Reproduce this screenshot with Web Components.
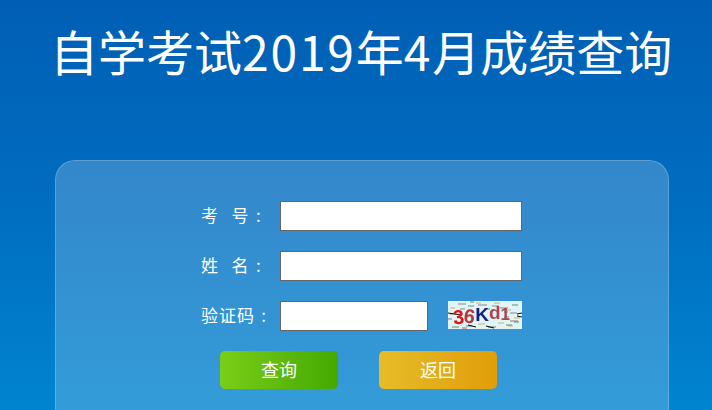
<!DOCTYPE html>
<html lang="zh">
<head>
<meta charset="utf-8">
<title>自学考试2019年4月成绩查询</title>
<style>
  html, body { margin: 0; height: 100%; }
  body {
    height: 410px;
    overflow: hidden;
    background: linear-gradient(180deg, #005fb5 0px, #006dc0 200px, #0084d0 410px);
    font-family: "Noto Sans CJK SC", "Liberation Sans", sans-serif;
  }
</style>
</head>
<body>
<score-page>
  <page-title slot="title">自学考试<i>2019</i>年<i>4</i>月成绩查询</page-title>
  <form-row><span slot="label">考&nbsp;&nbsp;号 :</span></form-row>
  <form-row><span slot="label">姓&nbsp;&nbsp;名 :</span></form-row>
  <form-row short><span slot="label">验证码 :</span><captcha-box slot="extra"></captcha-box></form-row>
  <div slot="actions" style="display:flex;gap:41px">
    <action-button>查询</action-button>
    <action-button kind="back">返回</action-button>
  </div>
</score-page>

<script>
class scorePage extends HTMLElement {
  constructor() {
    super();
    this.attachShadow({ mode: 'open' }).innerHTML = `
      <style>
        :host { display: block; }
        .panel {
          box-sizing: border-box;
          margin: 0 43px 0 55px;
          height: 250px;
          padding: 40px 146px 0 146px;
          border: 1px solid rgba(255,255,255,.2);
          border-bottom: 0;
          border-radius: 20px 20px 0 0;
          background: rgba(255,255,255,.2);
        }
        .rows { display: flex; flex-direction: column; gap: 20px; }
        .actions { display: flex; margin: 20px 0 0 18px; }
      </style>
      <slot name="title"></slot>
      <div class="panel">
        <div class="rows"><slot></slot></div>
        <div class="actions"><slot name="actions"></slot></div>
      </div>`;
  }
}
customElements.define('score-page', scorePage);

class pageTitle extends HTMLElement {
  constructor() {
    super();
    this.attachShadow({ mode: 'open' }).innerHTML = `
      <style>
        :host {
          display: block;
          box-sizing: border-box;
          height: 160px;
          padding: 15px 0 0 50px;
          color: #fff;
          font-size: 48px;
          font-weight: 400;
          line-height: 70px;
          white-space: nowrap;
        }
        ::slotted(i) { font-style: normal; letter-spacing: 1.8px; }
      </style>
      <slot></slot>`;
  }
}
customElements.define('page-title', pageTitle);

class formRow extends HTMLElement {
  constructor() {
    super();
    this.attachShadow({ mode: 'open' }).innerHTML = `
      <style>
        :host { display: flex; align-items: center; height: 30px; color: #fff; font-size: 17px; }
        .label { flex: none; width: 79px; margin-left: -1px; letter-spacing: 1px; word-spacing: 1.5px; white-space: nowrap; position: relative; top: -2px; }
        input {
          flex: none;
          box-sizing: border-box;
          width: 242px;
          height: 30px;
          margin: 0;
          padding: 0 4px;
          border: 1px solid #666;
          background: #fff;
        }
        :host([short]) input { width: 148px; margin-right: 20px; }
      </style>
      <div class="label"><slot name="label"></slot></div>
      <input type="text">
      <slot name="extra"></slot>`;
  }
}
customElements.define('form-row', formRow);

class captchaBox extends HTMLElement {
  constructor() {
    super();
    this.attachShadow({ mode: 'open' }).innerHTML = `
      <style>
        :host {
          display: block;
          flex: none;
          position: relative;
          width: 74px;
          height: 28px;
          margin-top: -2px;
          overflow: hidden;
          background: #e2f5f6;
          font: bold 20px "Liberation Sans", sans-serif;
        }
        svg { position: absolute; left: 0; top: 0; }
        .code { position: absolute; left: 5px; top: 3px; display: flex; line-height: 22px; white-space: nowrap; filter: blur(.3px); }
        b { display: block; }
      </style>
      <svg width="74" height="28" viewBox="0 0 74 28">
        <g stroke-width="1.2" fill="none">
          <path d="M10 3h8M20 5h6M30 4h9M44 5h7M52 7h8M12 8h5M62 12h7M2 13h3M56 16h5M36 8h6" stroke="#7d8a90"/>
          <path d="M28 2h5M46 2h6M58 9h5M66 17h6M6 22h6M30 23h7M50 22h6M60 25h5M2 7h5" stroke="#c9b35a"/>
          <path d="M4 26h7M18 25h6M40 26h8M58 24h6M22 1h4M64 4h6M66 21h5" stroke="#5e8f6a"/>
          <path d="M0 12l13 2M20 24l8 2M38 25l8 2M69 13l5-1M69 15l5 1" stroke="#111"/>
          <path d="M0 18h4M62 20h8M14 27h5M56 11h4" stroke="#a56a70"/>
        </g>
      </svg>
      <div class="code">
        <b style="color:#e2141c;transform:translateY(2px) rotate(-6deg)">3</b>
        <b style="color:#b2383c;transform:translateY(1px) rotate(8deg)">6</b>
        <b style="color:#14207e;font-size:19px">K</b>
        <b style="color:#a8454e;font-size:19px;transform:translateY(-2px)">d</b>
        <b style="color:#a8454e;font-size:17px">1</b>
      </div>`;
  }
}
customElements.define('captcha-box', captchaBox);

class actionButton extends HTMLElement {
  constructor() {
    super();
    this.attachShadow({ mode: 'open' }).innerHTML = `
      <style>
        :host {
          display: flex;
          align-items: center;
          justify-content: center;
          box-sizing: border-box;
          width: 118px;
          height: 38px;
          padding-bottom: 3px;
          border-radius: 5px;
          color: #fff;
          font-size: 18px;
          background: linear-gradient(90deg, #7ace18, #44a800);
        }
        :host([kind="back"]) { background: linear-gradient(90deg, #e6bc28, #e09e0a); }
      </style>
      <slot></slot>`;
  }
}
customElements.define('action-button', actionButton);
</script>
</body>
</html>
